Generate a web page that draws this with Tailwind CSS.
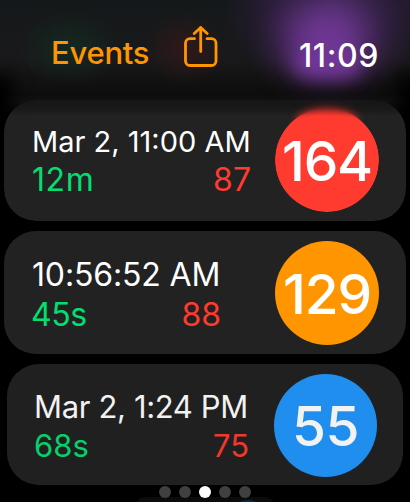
<!DOCTYPE html>
<html lang="en">
<head>
  <meta charset="UTF-8">
  <meta name="viewport" content="width=device-width, initial-scale=1.0">
  <title>Events</title>
  <script src="https://cdn.jsdelivr.net/npm/@tailwindcss/browser@4"></script>
</head>
<body class="bg-black">

<div class="relative flex flex-col w-[410px] h-[502px] bg-black text-white overflow-hidden font-['Inter',sans-serif]">

  <!-- blurred content behind the header -->
  <div class="absolute inset-x-0 top-0 h-[120px] overflow-hidden">
    <div class="absolute left-0 top-0 w-full h-[120px] bg-[linear-gradient(to_bottom,#15181a,#19191b_50%,#111111_69%,#0d0d0d_78%,#111111_85%,transparent)]"></div>
    <div class="absolute left-[20px] top-[10px] w-[100px] h-[75px] bg-[radial-gradient(closest-side,#13291f,transparent)]"></div>
    <div class="absolute left-[145px] top-[12px] w-[80px] h-[72px] bg-[radial-gradient(closest-side,#301818,transparent)]"></div>
    <div class="absolute left-[225px] -top-[70px] w-[215px] h-[160px] bg-[radial-gradient(closest-side,#55307399,#3b215099_50%,transparent)]"></div>
    <div class="absolute left-[285px] top-[6px] w-[84px] h-[66px] rounded-full bg-[#73399a] blur-[18px]"></div>
    <div class="absolute left-[294px] top-[50px] w-[66px] h-[26px] rounded-full bg-[#75379a] blur-[9px]"></div>
    <div class="absolute -left-[30px] top-[75px] w-[42px] h-[80px] bg-black blur-[9px]"></div>
    <div class="absolute -right-[30px] top-[75px] w-[42px] h-[80px] bg-black blur-[9px]"></div>
  </div>

  <header class="relative flex items-center h-[100px] shrink-0">
    <h1 class="ml-[51px] mt-[5px] w-[132px] text-[31px] leading-[36px] font-medium tracking-[-0.25px] text-[#ff9500]">Events</h1>
    <svg class="w-[36px] h-[44px] -mt-[7px]" viewBox="0 0 36 44" fill="none" stroke="#ff9500" stroke-width="2.8" stroke-linecap="round" stroke-linejoin="round">
      <path d="M11.500 13.700H7a4.500 4.500 0 0 0-4.500 4.500V36a4.500 4.500 0 0 0 4.500 4.500h21.500A4.500 4.500 0 0 0 33 36V18.200a4.500 4.500 0 0 0-4.500-4.500H24" />
      <path d="M17.700 26.500V2.500M11.200 8.500l6.500-6 6.500 6" />
    </svg>
    <time class="ml-auto mr-[31px] mt-[11px] text-[32px] leading-[36px] font-medium tracking-[0.6px]">11:09</time>
  </header>

  <main class="relative">
    <section class="flex h-[121px] mx-[4px] rounded-[32px] bg-[#222222] mask-[linear-gradient(to_bottom,transparent_-6px,black_16px)]">
      <div class="w-[219px] ml-[28px] pt-[23px]">
        <div class="text-[29px] leading-[37px] whitespace-nowrap">Mar 2, 11:00 AM</div>
        <div class="flex justify-between text-[32px] leading-[39px]">
          <span class="tracking-[0.6px] text-[#04de71]">12m</span>
          <span class="text-[#ff3b30]">87</span>
        </div>
      </div>
      <div class="relative w-[104px] h-[104px] ml-[24px] mt-[8px] text-[55px] font-medium tracking-[-1.2px]">
        <!-- soft top edge where the card slides under the header -->
        <div class="absolute left-[22px] top-[-1px] w-[60px] h-[30px] rounded-[50%] bg-[#ff3b30] blur-[4px]"></div>
        <div class="relative flex items-center justify-center w-full h-full pt-[2px] rounded-full bg-[#ff3b30] mask-[linear-gradient(to_bottom,transparent,black_11px)]">164</div>
      </div>
    </section>

    <section class="flex h-[123px] mx-[4px] mt-[10px] rounded-[32px] bg-[#222222]">
      <div class="w-[189px] ml-[28px] pt-[23px]">
        <div class="text-[32px] leading-[41px] tracking-[-0.15px] whitespace-nowrap">10:56:52 AM</div>
        <div class="flex justify-between text-[32px] leading-[39px]">
          <span class="-ml-px tracking-[-0.5px] text-[#04de71]">45s</span>
          <span class="text-[#ff3b30]">88</span>
        </div>
      </div>
      <div class="flex items-center justify-center w-[104px] h-[104px] ml-[54px] mt-[10px] pt-[2px] rounded-full bg-[#ff9500] text-[55px] font-medium tracking-[-1.2px]">129</div>
    </section>

    <section class="flex h-[121px] mx-[7px] mt-[10px] rounded-[32px] bg-[#202020]">
      <div class="w-[215px] ml-[27px] pt-[22px]">
        <div class="text-[31px] leading-[41px] tracking-[-0.35px] whitespace-nowrap text-[#f2f2f2]">Mar 2, 1:24 PM</div>
        <div class="flex justify-between text-[31px] leading-[38px]">
          <span class="text-[#06d06c]">68s</span>
          <span class="text-[#f0382e]">75</span>
        </div>
      </div>
      <div class="flex items-center justify-center w-[103px] h-[103px] ml-[25px] mt-[10px] pt-[2px] rounded-full bg-[#1f8eef] text-[55px] font-medium tracking-[-0.5px] text-[#f2f2f2]">55</div>
    </section>

    <!-- next card scrolling in -->
    <section class="relative h-[30px] w-[140px] mx-auto mt-[12px] rounded-[10px] bg-[#0b0b0b] overflow-hidden">
      <div class="absolute left-[95px] top-[3px] w-[36px] h-[36px] rounded-full bg-[#06284a]"></div>
    </section>
  </main>

  <!-- page dots -->
  <nav class="absolute left-[159px] top-[486px] flex gap-2">
    <span class="size-3 rounded-full bg-[#404040]"></span>
    <span class="size-3 rounded-full bg-[#404040]"></span>
    <span class="size-3 rounded-full bg-white"></span>
    <span class="size-3 rounded-full bg-[#404040]"></span>
    <span class="size-3 rounded-full bg-[#404040]"></span>
  </nav>
</div>

</body>
</html>
